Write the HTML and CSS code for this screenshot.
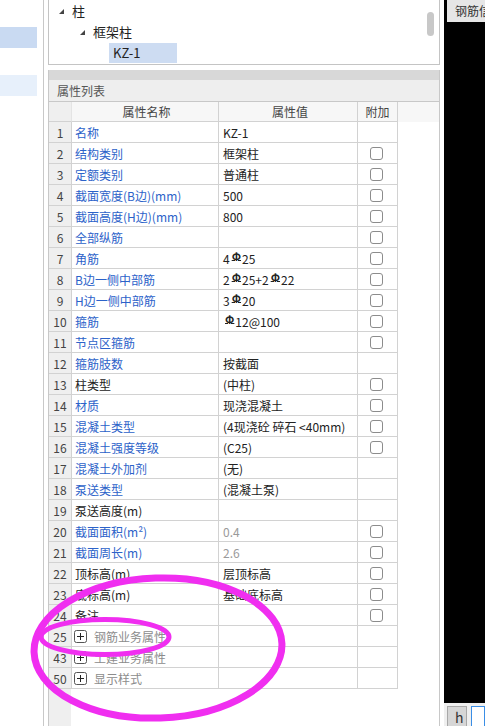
FILE: index.html
```html
<!DOCTYPE html>
<html lang="zh">
<head>
<meta charset="utf-8">
<title>属性列表</title>
<link rel="stylesheet" href="styles.css">
</head>
<body>
<div class="app">
  <div class="left">
    <div class="band band-sel"></div>
    <div class="band band-hover"></div>
  </div>
  <div class="main">
    <div class="tree">
      <div class="trow lvl1"><svg class="tri" width="5" height="5" viewBox="0 0 5 5"><polygon points="5,0 5,5 0,5" fill="#444"/></svg><span>柱</span></div>
      <div class="trow lvl2"><svg class="tri" width="5" height="5" viewBox="0 0 5 5"><polygon points="5,0 5,5 0,5" fill="#444"/></svg><span>框架柱</span></div>
      <div class="trow lvl3"><span class="sel">KZ-1</span></div>
      <div class="thumb"></div>
    </div>
    <div class="panel">
      <div class="graybar"></div>
      <div class="title">属性列表</div>
      <div class="head">
        <div class="c num"></div>
        <div class="c name hc">属性名称</div>
        <div class="c val hc">属性值</div>
        <div class="c ext hc">附加</div>
      </div>
      <div class="row"><div class="c num">1</div><div class="c name blue">名称</div><div class="c val">KZ-1</div><div class="c ext"></div></div>
      <div class="row"><div class="c num">2</div><div class="c name blue">结构类别</div><div class="c val">框架柱</div><div class="c ext"><span class="cb"></span></div></div>
      <div class="row"><div class="c num">3</div><div class="c name blue">定额类别</div><div class="c val">普通柱</div><div class="c ext"><span class="cb"></span></div></div>
      <div class="row"><div class="c num">4</div><div class="c name blue">截面宽度(B边)(mm)</div><div class="c val">500</div><div class="c ext"><span class="cb"></span></div></div>
      <div class="row"><div class="c num">5</div><div class="c name blue">截面高度(H边)(mm)</div><div class="c val">800</div><div class="c ext"><span class="cb"></span></div></div>
      <div class="row"><div class="c num">6</div><div class="c name blue">全部纵筋</div><div class="c val"></div><div class="c ext"><span class="cb"></span></div></div>
      <div class="row"><div class="c num">7</div><div class="c name blue">角筋</div><div class="c val">4<span class="rb">Φ</span>25</div><div class="c ext"><span class="cb"></span></div></div>
      <div class="row"><div class="c num">8</div><div class="c name blue">B边一侧中部筋</div><div class="c val">2<span class="rb">Φ</span>25+2<span class="rb">Φ</span>22</div><div class="c ext"><span class="cb"></span></div></div>
      <div class="row"><div class="c num">9</div><div class="c name blue">H边一侧中部筋</div><div class="c val">3<span class="rb">Φ</span>20</div><div class="c ext"><span class="cb"></span></div></div>
      <div class="row"><div class="c num">10</div><div class="c name blue">箍筋</div><div class="c val"><span class="rb">Φ</span>12@100</div><div class="c ext"><span class="cb"></span></div></div>
      <div class="row"><div class="c num">11</div><div class="c name blue">节点区箍筋</div><div class="c val"></div><div class="c ext"><span class="cb"></span></div></div>
      <div class="row"><div class="c num">12</div><div class="c name blue">箍筋肢数</div><div class="c val">按截面</div><div class="c ext"></div></div>
      <div class="row"><div class="c num">13</div><div class="c name">柱类型</div><div class="c val">(中柱)</div><div class="c ext"><span class="cb"></span></div></div>
      <div class="row"><div class="c num">14</div><div class="c name blue">材质</div><div class="c val">现浇混凝土</div><div class="c ext"><span class="cb"></span></div></div>
      <div class="row"><div class="c num">15</div><div class="c name blue">混凝土类型</div><div class="c val">(4现浇砼 碎石 &lt;40mm)</div><div class="c ext"><span class="cb"></span></div></div>
      <div class="row"><div class="c num">16</div><div class="c name blue">混凝土强度等级</div><div class="c val">(C25)</div><div class="c ext"><span class="cb"></span></div></div>
      <div class="row"><div class="c num">17</div><div class="c name blue">混凝土外加剂</div><div class="c val">(无)</div><div class="c ext"></div></div>
      <div class="row"><div class="c num">18</div><div class="c name blue">泵送类型</div><div class="c val">(混凝土泵)</div><div class="c ext"></div></div>
      <div class="row"><div class="c num">19</div><div class="c name">泵送高度(m)</div><div class="c val"></div><div class="c ext"></div></div>
      <div class="row"><div class="c num">20</div><div class="c name blue">截面面积(m²)</div><div class="c val gray">0.4</div><div class="c ext"><span class="cb"></span></div></div>
      <div class="row"><div class="c num">21</div><div class="c name blue">截面周长(m)</div><div class="c val gray">2.6</div><div class="c ext"><span class="cb"></span></div></div>
      <div class="row"><div class="c num">22</div><div class="c name">顶标高(m)</div><div class="c val">层顶标高</div><div class="c ext"><span class="cb"></span></div></div>
      <div class="row"><div class="c num">23</div><div class="c name">底标高(m)</div><div class="c val">基础底标高</div><div class="c ext"><span class="cb"></span></div></div>
      <div class="row"><div class="c num">24</div><div class="c name">备注</div><div class="c val"></div><div class="c ext"><span class="cb"></span></div></div>
      <div class="row"><div class="c num">25</div><div class="c name grp"><svg class="plus" width="13" height="13" viewBox="0 0 13 13"><rect x="0.5" y="0.5" width="12" height="12" rx="2" fill="#fff" stroke="#555"/><path d="M3 6.5H10M6.5 3V10" stroke="#222" stroke-width="1"/></svg>钢筋业务属性</div><div class="c val"></div><div class="c ext"></div></div>
      <div class="row"><div class="c num">43</div><div class="c name grp"><svg class="plus" width="13" height="13" viewBox="0 0 13 13"><rect x="0.5" y="0.5" width="12" height="12" rx="2" fill="#fff" stroke="#555"/><path d="M3 6.5H10M6.5 3V10" stroke="#222" stroke-width="1"/></svg>土建业务属性</div><div class="c val"></div><div class="c ext"></div></div>
      <div class="row"><div class="c num">50</div><div class="c name grp"><svg class="plus" width="13" height="13" viewBox="0 0 13 13"><rect x="0.5" y="0.5" width="12" height="12" rx="2" fill="#fff" stroke="#555"/><path d="M3 6.5H10M6.5 3V10" stroke="#222" stroke-width="1"/></svg>显示样式</div><div class="c val"></div><div class="c ext"></div></div>
      <div class="filler"><div class="filler-num"></div></div>
    </div>
  </div>
  <div class="gapcol"></div>
  <div class="right">
    <div class="rtab">钢筋信息</div>
    <div class="black"></div>
    <div class="rbottom">
      <span class="rbtn">h</span>
      <span class="rbox"></span>
    </div>
  </div>
</div>
<svg class="annot" width="485" height="726" viewBox="0 0 485 726">
  <ellipse cx="158" cy="648" rx="124" ry="70" transform="rotate(-2 158 648)" fill="none" stroke="#f02ef0" stroke-width="7"/>
  <ellipse cx="105" cy="637" rx="64" ry="17.5" fill="none" stroke="#f02ef0" stroke-width="5"/>
</svg>
</body>
</html>
```
FILE: styles.css
```css
html, body {
  margin: 0;
  padding: 0;
  background: #fff;
}
body {
  font-family: "Noto Sans CJK SC", "Noto Sans", sans-serif;
  font-size: 12px;
  color: #222;
  width: 485px;
  height: 726px;
  overflow: hidden;
  position: relative;
}
.app {
  display: flex;
  width: 485px;
  height: 726px;
}
.left {
  width: 43px;
  flex: none;
  border-right: 1px solid #c8c8c8;
  padding-top: 27px;
}
.band {
  width: 37px;
  height: 21px;
}
.band-sel { background: #c9daf2; }
.band-hover { background: #e7f0fb; margin-top: 27px; }

.main {
  width: 396px;
  flex: none;
  box-sizing: border-box;
  padding-left: 4px;
  display: flex;
  flex-direction: column;
}
.tree {
  height: 65px;
  box-sizing: border-box;
  border: 1px solid #c4c4c4;
  border-top: none;
  position: relative;
  font-size: 13px;
  color: #222;
  flex: none;
}
.trow {
  height: 21px;
  display: flex;
  align-items: center;
}
.tri { flex: none; margin-right: 8px; margin-top: 1px; }
.lvl1 { padding-left: 10px; }
.lvl2 { padding-left: 31px; }
.lvl3 { padding-left: 60px; }
.sel {
  display: block;
  width: 68px;
  height: 20px;
  line-height: 20px;
  box-sizing: border-box;
  padding-left: 4px;
  background: #cddcf2;
  margin-top: 1px;
}
.thumb {
  position: absolute;
  right: 5px;
  top: 12px;
  width: 7px;
  height: 24px;
  border-radius: 4px;
  background: #c8c8c8;
}

.panel {
  flex: 1;
  margin-top: 5px;
  border-left: 1px solid #c8c8c8;
  border-right: 1px solid #c8c8c8;
  display: flex;
  flex-direction: column;
  min-height: 0;
}
.graybar {
  height: 10px;
  background: #d8d8d8;
  flex: none;
}
.title {
  height: 21px;
  line-height: 21px;
  background: #eeeeee;
  border-bottom: 1px solid #c8c8c8;
  padding-left: 8px;
  color: #555;
  flex: none;
}
.head, .row {
  display: grid;
  grid-template-columns: 23px 147px 139px 40px;
  flex: none;
}
.head {
  height: 20px;
  background: #f7f7f7;
}
.row { height: 21px; }
.c {
  box-sizing: border-box;
  border-right: 1px solid #d2d2d2;
  border-bottom: 1px solid #d2d2d2;
  display: flex;
  align-items: center;
  white-space: nowrap;
  overflow: hidden;
}
.num {
  background: #efefef;
  justify-content: center;
  color: #444;
  font-size: 12px;
}
.head .num { border-right-color: #e4e4e4; }
.hc { justify-content: center; color: #444; }
.name { padding-left: 3px; }
.val { padding-left: 4px; }
.ext { justify-content: center; }
.blue { color: #2c62c9; }
.gray { color: #9a9a9a; }
.grp { color: #8c8c8c; padding-left: 2px; }
.plus { flex: none; margin-right: 7px; }
.cb {
  display: block;
  width: 13px;
  height: 13px;
  box-sizing: border-box;
  border: 1px solid #8c8c8c;
  border-radius: 3px;
  background: #fff;
  margin-right: 2px;
}
.rb {
  display: block;
  font-size: 11px;
  line-height: 14px;
  font-weight: bold;
  text-decoration: underline;
  text-underline-offset: -1px;
  position: relative;
  top: -2px;
  margin: 0 1px 0 2px;
}
.filler {
  flex: 1;
  display: flex;
}
.filler-num {
  width: 22px;
  background: #efefef;
}

.gapcol {
  width: 4px;
  flex: none;
}
.right {
  flex: 1;
  display: flex;
  flex-direction: column;
  background: #000;
  overflow: hidden;
}
.rtab {
  height: 22px;
  margin-left: 3px;
  background: #e6e6e6;
  padding-left: 8px;
  line-height: 21px;
  white-space: nowrap;
  overflow: hidden;
  color: #333;
  flex: none;
}
.black { flex: 1; }
.rbottom {
  height: 23px;
  background: #efefef;
  display: flex;
  align-items: flex-end;
  gap: 4px;
  padding-left: 3px;
  flex: none;
}
.rbtn {
  width: 25px;
  height: 20px;
  box-sizing: border-box;
  background: #d6d6d6;
  border: 1px solid #a8a8a8;
  border-bottom: none;
  font-size: 14px;
  line-height: 20px;
  padding-left: 7px;
  color: #333;
}
.rbox {
  width: 20px;
  height: 20px;
  box-sizing: border-box;
  border: 1px solid #3a8ee6;
  border-bottom: none;
  background: #fff;
}
.annot {
  position: absolute;
  left: 0;
  top: 0;
  pointer-events: none;
}
```
